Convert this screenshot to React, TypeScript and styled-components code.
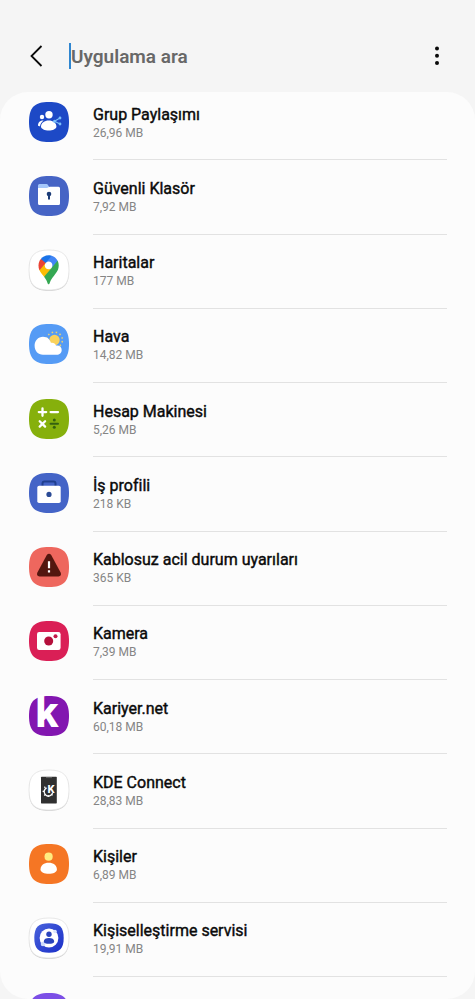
import React from "react";
import styled, { createGlobalStyle } from "styled-components";

const GlobalStyle = createGlobalStyle`
  *, *::before, *::after { box-sizing: border-box; }
  body {
    margin: 0;
    background: #f5f5f5;
    font-family: Roboto, "Liberation Sans", sans-serif;
  }
`;

const Screen = styled.div`
  display: flex;
  flex-direction: column;
  min-height: 100vh;
  background: #f5f5f5;
`;

const Header = styled.header`
  display: flex;
  align-items: center;
  height: 92px;
  padding: 20px 24px 0;
`;

const IconButton = styled.button`
  display: flex;
  align-items: center;
  justify-content: center;
  flex: none;
  width: 28px;
  height: 40px;
  padding: 0;
  border: 0;
  background: none;
  color: #0a0a0a;
  cursor: pointer;
`;

const SearchField = styled.input`
  flex: 1;
  min-width: 0;
  height: 26px;
  margin: 0 16px 0 17px;
  padding: 0;
  border: 0;
  border-left: 2px solid #2f86d0;
  outline: 0;
  background: none;
  color: #0a0a0a;
  caret-color: transparent;
  font: 600 19px Roboto, "Liberation Sans", sans-serif;

  &::placeholder {
    color: #686868;
    opacity: 1;
  }
`;

const Panel = styled.main`
  display: flex;
  flex-direction: column;
  flex: 1;
  overflow: hidden;
  border-radius: 28px;
  background: #fcfcfc;
`;

const AppList = styled.ul`
  display: grid;
  grid-auto-rows: minmax(74px, 1fr);
  flex: 1;
  margin: -6px 0 0;
  padding: 0;
  list-style: none;
`;

const Row = styled.li`
  display: flex;
  padding: 0 28px 0 29px;
`;

const IconSlot = styled.div`
  display: flex;
  align-items: center;
  flex: none;
  width: 64px;
  padding-bottom: 3px;
`;

const Details = styled.div`
  display: flex;
  flex-direction: column;
  justify-content: center;
  flex: 1;
  min-width: 0;
  border-bottom: 1px solid #e2e2e2;
`;

const Name = styled.span`
  color: #0a0a0a;
  font-size: 16px;
  line-height: 20px;
  -webkit-text-stroke: 0.4px currentColor;
`;

const Size = styled.span`
  color: #858585;
  font-size: 12px;
  line-height: 16px;
`;

const PeekRow = styled.div`
  height: 22px;
  padding: 16px 29px 0;
  overflow: hidden;
`;

const IconSvg = styled.svg`
  display: block;
  flex: none;
  overflow: visible;
`;

const SQUIRCLE = "M20 0C34.500 0 40 5.500 40 20S34.500 40 20 40 0 34.500 0 20 5.500 0 20 0Z";

function AppIcon({ bg, light, children }: { bg: string; light?: boolean; children?: React.ReactNode }) {
  return (
    <IconSvg width="40" height="40" viewBox="0 0 40 40" aria-hidden="true">
      {light && <path d={SQUIRCLE} fill="#c8c8c8" transform="translate(0 .7)" />}
      <path d={SQUIRCLE} fill={bg} stroke={light ? "#e2e2e2" : "none"} strokeWidth=".8" />
      {children}
    </IconSvg>
  );
}

const GroupSharing = () => (
  <AppIcon bg="#1d49c6">
    <circle cx="13" cy="15" r="2.200" fill="#fff" />
    <path d="M9 23.600C9 20.500 11 18.600 14.600 18.600 12.600 20 11.400 22 11 24.200 10 24.300 9 24.200 9 23.600Z" fill="#fff" />
    <circle cx="20" cy="12.700" r="3.700" fill="#fff" />
    <path d="M12 24.500C12 21 15.500 18.500 19.700 18.500S27.400 21 27.400 24.500C27.400 27 23.500 28.500 19.700 28.500S12 27 12 24.500Z" fill="#fff" />
    <path d="M31 16 25.500 19.200 31 22" fill="none" stroke="#7cc0fa" strokeWidth="1.100" />
    <g fill="#7cc0fa">
      <circle cx="31" cy="16" r="1.400" />
      <circle cx="25.500" cy="19.200" r="1.500" />
      <circle cx="31" cy="22" r="1.400" />
    </g>
  </AppIcon>
);

const SecureFolder = () => (
  <AppIcon bg="#4664c5">
    <path d="M9 14V9.500Q9 8 10.500 8H17.500Q18.500 8 19 9L20.500 11.500V14Z" fill="#a6c8fb" />
    <path d="M9 12H17.500Q19 12 19.500 11.300T21 10.700H29.500Q31 10.700 31 12.200V27.500Q31 29 29.500 29H10.500Q9 29 9 27.500Z" fill="#fff" />
    <circle cx="20" cy="18" r="2.300" fill="#1d3d78" />
    <path d="M19 18h2v5.500h-2z" fill="#1d3d78" />
  </AppIcon>
);

const Maps = () => (
  <AppIcon bg="#fff" light>
    <g transform="translate(9.500 5.300) scale(.079)">
      <path fill="#34a853" d="M70.585 271.865a370.712 370.712 0 0 1 28.911 42.642c7.374 13.982 10.448 23.463 15.837 40.31c3.305 9.308 6.292 12.086 12.714 12.086c6.998 0 10.173-4.726 12.626-12.035c5.094-15.91 9.091-28.052 15.397-39.525c12.374-22.15 27.75-41.833 42.858-60.75c4.09-5.354 30.534-36.545 42.439-61.156c0 0 14.632-27.035 14.632-64.792c0-35.318-14.43-59.813-14.43-59.813l-41.545 11.126l-25.23 66.451l-6.242 9.163l-1.248 1.66l-1.66 2.078l-2.914 3.319l-4.164 4.163l-22.467 18.304l-56.17 32.432z" />
      <path fill="#fbbc04" d="M12.612 188.892c13.709 31.313 40.145 58.839 58.031 82.995l95.001-112.534s-13.384 17.504-37.662 17.504c-27.043 0-48.89-21.595-48.89-48.825c0-18.673 11.234-31.501 11.234-31.501l-64.489 17.28z" />
      <path fill="#4285f4" d="M166.705 5.787c31.552 10.173 58.558 31.53 74.893 63.023l-75.925 90.478s11.234-13.06 11.234-31.617c0-27.864-23.463-48.68-48.81-48.68c-23.969 0-37.735 17.475-37.735 17.475v-57z" />
      <path fill="#1a73e8" d="M30.015 45.765C48.86 23.218 82.02 0 127.736 0c22.18 0 38.89 5.823 38.89 5.823L90.29 96.516H36.205z" />
      <path fill="#ea4335" d="M12.612 188.892S0 164.194 0 128.414c0-33.817 13.146-63.377 30.015-82.649l60.318 50.759z" />
    </g>
  </AppIcon>
);

const Weather = () => (
  <AppIcon bg="#559bf5">
    <circle cx="25.500" cy="16" r="7.900" fill="none" stroke="#efd26c" strokeWidth="1.500" strokeDasharray="1.500 2.636" strokeDashoffset="-1" />
    <circle cx="25.500" cy="16" r="5.200" fill="#f9d25c" />
    <path d="M14 12.800C18.500 12.800 21 15.600 21.900 18.800 24 18.200 26.500 19.400 27 21.600 30.500 21 32.700 23.200 32.700 26 32.700 28.800 30.600 30.800 27.600 30.800H14C9 30.800 5.600 26.800 5.600 21.800S9 12.800 14 12.800Z" fill="#fff" />
  </AppIcon>
);

const Calculator = () => (
  <AppIcon bg="#86b00c">
    <g fill="none" stroke="#fff" strokeWidth="2.300" strokeLinecap="round">
      <path d="M13.500 9.400v7.400M9.800 13.100h7.400M21.600 13.100h7.400M10.700 22.200l5.400 5.400M16.100 22.200l-5.400 5.400" />
    </g>
    <path d="M21.600 24.700h7.400" stroke="#35610f" strokeWidth="2" strokeLinecap="round" />
    <circle cx="25.300" cy="21" r="1.500" fill="#35610f" />
    <circle cx="25.300" cy="28.300" r="1.500" fill="#35610f" />
  </AppIcon>
);

const WorkProfile = () => (
  <AppIcon bg="#4464c7">
    <path d="M13.500 13V10.500Q13.500 8.500 15.500 8.500H24.500Q26.500 8.500 26.500 10.500V13" fill="none" stroke="#203f8f" strokeWidth="2" />
    <rect x="8.300" y="12.800" width="23.400" height="17.200" rx="1.800" fill="#fff" />
    <circle cx="20" cy="21.400" r="2.600" fill="#2b4b96" />
  </AppIcon>
);

const EmergencyAlerts = () => (
  <AppIcon bg="#ee675e">
    <path d="M17.800 8Q20 5.400 22.200 8L31.600 25.500Q33 29 29.500 29.400H10.500Q7 29 8.400 25.500Z" fill="#54160f" />
    <path d="M18.900 14.300h2.200v7h-2.200zM18.900 23.300h2.200v2.200h-2.200z" fill="#fff" />
  </AppIcon>
);

const CameraIcon = () => (
  <AppIcon bg="#da1f56">
    <rect x="8" y="11" width="23.600" height="18" rx="2.200" fill="#fff" />
    <circle cx="19.700" cy="20" r="4.500" fill="#b5103c" />
    <circle cx="26.500" cy="15.300" r="2" fill="#c3194a" />
  </AppIcon>
);

const Kariyer = () => (
  <AppIcon bg="#8216b0">
    <text x="6.500" y="31" fill="#fff" fontFamily="Roboto, sans-serif" fontWeight="800" fontSize="42">k</text>
  </AppIcon>
);

const KdeConnect = () => (
  <AppIcon bg="#fff" light>
    <rect x="12" y="6.800" width="15.800" height="26.600" rx=".6" fill="#303030" />
    <path d="M17 7.600h6" stroke="#8a8a8a" strokeWidth=".6" />
    <path d="M17.600 17.800A4.300 4.300 0 1 0 23.600 22.800" fill="none" stroke="#fff" strokeWidth="1.300" />
    <path d="M16.400 17.800 15.300 16.700M15 21.400H13.600M16.300 24.400 15.200 25.500M19.300 25.400V27M22.400 24.300 23.500 25.400" stroke="#fff" strokeWidth="1.300" />
    <text x="18.600" y="22.500" fill="#fff" fontFamily="Roboto, sans-serif" fontWeight="800" fontSize="11">K</text>
  </AppIcon>
);

const Contacts = () => (
  <AppIcon bg="#f57624">
    <circle cx="19.600" cy="12.700" r="4.100" fill="#ffec80" />
    <path d="M11.500 25.500C11.500 21.500 15 18.800 19.700 18.800S27.900 21.500 27.900 25.500C27.900 28.200 24 29.800 19.700 29.800S11.500 28.200 11.500 25.500Z" fill="#fff" />
  </AppIcon>
);

const Customization = () => (
  <AppIcon bg="#fff" light>
    <defs>
      <linearGradient id="customization-fill" x1="0" y1="0" x2="1" y2="1">
        <stop offset="0" stopColor="#4a63dc" />
        <stop offset="1" stopColor="#1a2fc8" />
      </linearGradient>
    </defs>
    <path d={SQUIRCLE} fill="url(#customization-fill)" transform="translate(5.300 5.300) scale(.735)" />
    <circle cx="20" cy="20" r="9.400" fill="#fff" />
    <circle cx="14" cy="26" r="2.300" fill="#cfdcfb" />
    <circle cx="26" cy="13.500" r="1.800" fill="#dbe5fc" />
    <circle cx="20" cy="16.300" r="2.700" fill="#2a44bd" />
    <path d="M14.800 23.300C14.800 21.200 17 20 20 20S25.200 21.200 25.200 23.300 23 25.800 20 25.800 14.800 25.400 14.800 23.300Z" fill="#2a44bd" />
  </AppIcon>
);

const apps: { name: string; size: string; Icon: () => React.ReactElement }[] = [
  { name: "Grup Paylaşımı", size: "26,96 MB", Icon: GroupSharing },
  { name: "Güvenli Klasör", size: "7,92 MB", Icon: SecureFolder },
  { name: "Haritalar", size: "177 MB", Icon: Maps },
  { name: "Hava", size: "14,82 MB", Icon: Weather },
  { name: "Hesap Makinesi", size: "5,26 MB", Icon: Calculator },
  { name: "İş profili", size: "218 KB", Icon: WorkProfile },
  { name: "Kablosuz acil durum uyarıları", size: "365 KB", Icon: EmergencyAlerts },
  { name: "Kamera", size: "7,39 MB", Icon: CameraIcon },
  { name: "Kariyer.net", size: "60,18 MB", Icon: Kariyer },
  { name: "KDE Connect", size: "28,83 MB", Icon: KdeConnect },
  { name: "Kişiler", size: "6,89 MB", Icon: Contacts },
  { name: "Kişiselleştirme servisi", size: "19,91 MB", Icon: Customization },
];

export default function App() {
  return (
    <Screen lang="tr">
      <GlobalStyle />
      <Header>
        <IconButton type="button" aria-label="Geri">
          <IconSvg width="24" height="24" viewBox="0 0 24 24" fill="none" stroke="currentColor" strokeWidth="1.800" aria-hidden="true">
            <path d="M15.500 2 5.500 12l10 10" />
          </IconSvg>
        </IconButton>
        <SearchField type="text" placeholder="Uygulama ara" aria-label="Uygulama ara" />
        <IconButton type="button" aria-label="Diğer seçenekler">
          <IconSvg width="24" height="24" viewBox="0 0 24 24" fill="currentColor" aria-hidden="true">
            <circle cx="12" cy="4.500" r="2" />
            <circle cx="12" cy="11.700" r="2" />
            <circle cx="12" cy="19" r="2" />
          </IconSvg>
        </IconButton>
      </Header>
      <Panel>
        <AppList>
          {apps.map(({ name, size, Icon }) => (
            <Row key={name}>
              <IconSlot>
                <Icon />
              </IconSlot>
              <Details>
                <Name>{name}</Name>
                <Size>{size}</Size>
              </Details>
            </Row>
          ))}
        </AppList>
        <PeekRow>
          <AppIcon bg="#7c4fe6" />
        </PeekRow>
      </Panel>
    </Screen>
  );
}
